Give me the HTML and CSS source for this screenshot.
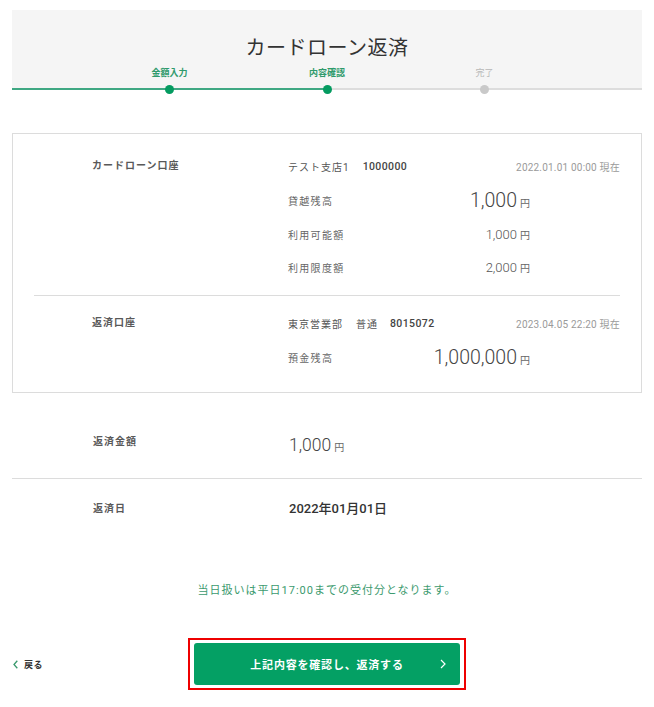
FILE: index.html
```html
<!DOCTYPE html>
<html lang="ja">
<head>
<meta charset="utf-8">
<title>カードローン返済</title>
<link rel="stylesheet" href="styles.css">
</head>
<body>
<div class="page">
  <header class="header">
    <h1 class="title">カードローン返済</h1>
    <ol class="steps">
      <li class="step done">金額入力</li>
      <li class="step done">内容確認</li>
      <li class="step todo">完了</li>
    </ol>
  </header>
  <div class="track">
    <span class="dot on"></span>
    <span class="dot on"></span>
    <span class="dot off"></span>
  </div>

  <section class="card">
    <div class="acct acct-first">
      <div class="acct-label">カードローン口座</div>
      <div class="acct-body">
        <div class="row">
          <span class="branch">テスト支店1</span><span class="num">1000000</span>
          <span class="asof">2022.01.01 00:00 現在</span>
        </div>
        <div class="row">
          <span class="kv-label">貸越残高</span>
          <span class="kv-value"><span class="big">1,000</span><span class="yen">円</span></span>
        </div>
        <div class="row">
          <span class="kv-label">利用可能額</span>
          <span class="kv-value"><span class="small">1,000</span><span class="yen">円</span></span>
        </div>
        <div class="row row-last">
          <span class="kv-label">利用限度額</span>
          <span class="kv-value"><span class="small">2,000</span><span class="yen">円</span></span>
        </div>
      </div>
    </div>
    <div class="acct acct-second">
      <div class="acct-label">返済口座</div>
      <div class="acct-body">
        <div class="row">
          <span class="branch">東京営業部</span><span class="branch type">普通</span><span class="num">8015072</span>
          <span class="asof">2023.04.05 22:20 現在</span>
        </div>
        <div class="row">
          <span class="kv-label">預金残高</span>
          <span class="kv-value"><span class="big">1,000,000</span><span class="yen">円</span></span>
        </div>
      </div>
    </div>
  </section>

  <div class="summary summary-first">
    <div class="sum-label">返済金額</div>
    <div class="sum-value"><span class="mid">1,000</span><span class="yen">円</span></div>
  </div>
  <div class="summary summary-second">
    <div class="sum-label">返済日</div>
    <div class="sum-date">2022年01月01日</div>
  </div>

  <p class="note">当日扱いは平日17:00までの受付分となります。</p>

  <div class="footer">
    <a class="back" href="#">
      <svg class="back-icon" width="5" height="9" viewBox="0 0 5 9"><polyline points="4.3,0.7 1,4.5 4.3,8.3" fill="none" stroke="#3a9a6e" stroke-width="1.3"/></svg>
      <span>戻る</span>
    </a>
    <div class="submit-frame">
      <button class="submit" type="button">
        <span class="submit-text">上記内容を確認し、返済する</span>
        <svg class="chev" width="6" height="10" viewBox="0 0 6 10"><polyline points="1,1 5,5 1,9" fill="none" stroke="#fff" stroke-width="1.2"/></svg>
      </button>
    </div>
    <span></span>
  </div>
</div>
</body>
</html>
```

FILE: styles.css
```css
* { box-sizing: border-box; }
html, body { margin: 0; padding: 0; background: #fff; }
body {
  font-family: Roboto, "Noto Sans CJK JP", sans-serif;
  color: #444;
}
.page {
  width: 654px;
  padding: 10px 12px 0 12px;
}
.header {
  background: #f5f5f5;
  padding: 24px 0 9px;
  text-align: center;
}
.title {
  margin: 0;
  font-size: 20px;
  line-height: 28px;
  font-weight: 400;
  color: #333;
  letter-spacing: 0.5px;
}
.steps {
  list-style: none;
  margin: 5px 0 0;
  padding: 0 78.75px;
  display: grid;
  grid-template-columns: repeat(3, 157.5px);
}
.step {
  font-size: 9px;
  line-height: 12px;
  font-weight: 700;
  text-align: center;
}
.step.done { color: #2f9a6c; }
.step.todo { color: #b8b8b8; font-weight: 400; }
.track {
  height: 2px;
  background: linear-gradient(90deg, #3fa883 50%, #dddddd 50%);
  display: grid;
  grid-template-columns: repeat(3, 157.5px);
  grid-template-rows: 2px;
  padding: 0 78.75px;
  justify-items: center;
}
.dot {
  width: 9px;
  height: 9px;
  border-radius: 50%;
  margin-top: -3.5px;
}
.dot.on { background: #049b60; }
.dot.off { background: #c9c9c9; }

.card {
  margin-top: 43px;
  border: 1px solid #dcdcdc;
  padding: 0 21px;
}
.acct {
  display: grid;
  grid-template-columns: 196px 1fr;
  padding-left: 58px;
}
.acct-first {
  padding-top: 15px;
  padding-bottom: 12px;
  border-bottom: 1px solid #dcdcdc;
}
.acct-second {
  padding-top: 10px;
  padding-bottom: 18px;
}
.acct-label {
  font-size: 10px;
  line-height: 34px;
  font-weight: 700;
  color: #595959;
  letter-spacing: 1px;
}
.row {
  height: 34px;
  display: flex;
  align-items: center;
}
.row-last { height: 32px; }
.branch {
  font-size: 10px;
  color: #555;
  letter-spacing: 1px;
  margin-right: 13px;
}
.branch.type { margin-right: 12px; }
.num {
  font-size: 10.5px;
  font-weight: 500;
  color: #444;
  letter-spacing: 0.4px;
}
.asof {
  margin-left: auto;
  font-size: 10px;
  color: #9a9a9a;
  letter-spacing: 0.2px;
}
.kv-label {
  width: 100px;
  font-size: 10px;
  color: #666;
  letter-spacing: 1.3px;
}
.kv-value {
  width: 142px;
  display: flex;
  justify-content: flex-end;
  align-items: baseline;
}
.big {
  font-size: 19.5px;
  font-weight: 300;
  color: #444;
}
.small {
  font-size: 13px;
  font-weight: 300;
  color: #555;
}
.yen {
  font-size: 10px;
  color: #666;
  margin-left: 3px;
}

.summary {
  display: grid;
  grid-template-columns: 196px 1fr;
  padding-left: 81px;
  align-items: start;
}
.summary-first {
  padding-top: 40px;
  padding-bottom: 18px;
  border-bottom: 1px solid #dcdcdc;
}
.summary-second {
  padding-top: 21px;
}
.sum-label {
  font-size: 10px;
  line-height: 14px;
  margin-top: 2px;
  font-weight: 700;
  color: #595959;
  letter-spacing: 1px;
}
.sum-value {
  display: flex;
  align-items: baseline;
  line-height: 24px;
}
.mid {
  font-size: 17.5px;
  font-weight: 300;
  color: #444;
}
.sum-date {
  font-size: 13px;
  line-height: 18px;
  font-weight: 500;
  color: #333;
}

.note {
  margin: 65px 0 0;
  text-align: center;
  font-size: 11px;
  line-height: 16px;
  color: #3b9a6e;
  letter-spacing: 1px;
}

.footer {
  margin-top: 39px;
  display: grid;
  grid-template-columns: 176px 278px 176px;
  align-items: center;
}
.back {
  display: flex;
  align-items: center;
  gap: 6px;
  padding-left: 1px;
  text-decoration: none;
  font-size: 9px;
  font-weight: 700;
  color: #333;
  letter-spacing: 0.5px;
}
.back-icon { display: block; }
.submit-frame {
  border: 2px solid #ee0000;
  padding: 3px 4px;
}
.submit {
  height: 42px;
  width: 266px;
  border: 0;
  border-radius: 3px;
  background: #04a064;
  color: #fff;
  font-family: Roboto, "Noto Sans CJK JP", sans-serif;
  font-size: 11px;
  font-weight: 700;
  letter-spacing: 0.8px;
  padding: 0;
  display: grid;
  grid-template-columns: 34px 1fr 34px;
  align-items: center;
}
.submit-text { grid-column: 2; text-align: center; }
.chev { grid-column: 3; justify-self: center; display: block; }
```
